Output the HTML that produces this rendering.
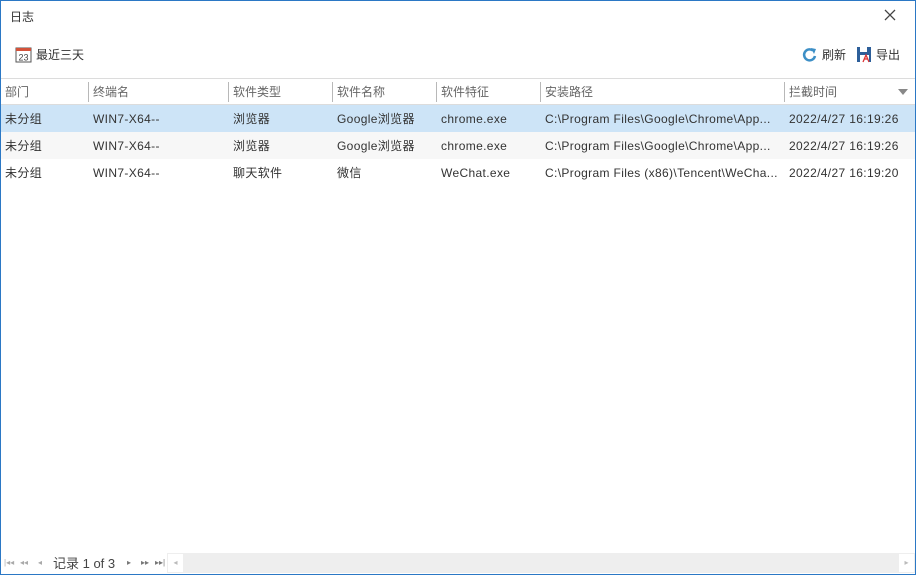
<!DOCTYPE html>
<html><head><meta charset="utf-8"><style>
*{margin:0;padding:0;box-sizing:border-box}
body{width:916px;height:575px;overflow:hidden;background:#fff;font-family:"Liberation Sans","Noto Sans CJK SC",sans-serif;font-size:12px;color:#333;position:relative}
.win{position:absolute;left:0;top:0;width:916px;height:575px;border:1px solid #2b78c5}
.title{position:absolute;left:10px;top:8px;font-size:12px;color:#333}
.close{position:absolute;left:884px;top:9px}
.tb{position:absolute;top:46px;font-size:12px;color:#333}
.hdr{position:absolute;left:1px;top:78px;width:914px;height:27px;border-top:1px solid #dcdcdc;border-bottom:1px solid #dcdcdc;background:#fff}
.hc{position:absolute;color:#666;padding-left:4px;border-left:1px solid #b8b8b8;height:20px;top:3px;line-height:20px}
.row{position:absolute;left:1px;width:914px;height:27px;line-height:28px;letter-spacing:0.35px}
.c{position:absolute;top:0;white-space:nowrap}
.pager{position:absolute;left:1px;top:553px;width:914px;height:21px;font-size:13px}
.pi{position:absolute;top:0;font-size:8px;line-height:20px}
</style></head><body>
<div class="win"></div>
<div class="title">日志</div>
<svg class="close" width="12" height="12" viewBox="0 0 12 12"><path d="M1 1L11 11M11 1L1 11" stroke="#444" stroke-width="1.3"/></svg>
<svg style="position:absolute;left:15px;top:46px" width="17" height="17" viewBox="0 0 17 17"><rect x="1" y="2" width="15" height="14" fill="#fff" stroke="#555"/><rect x="1" y="2" width="15" height="3" fill="#d3523a"/><text x="8.5" y="14.5" font-size="9" text-anchor="middle" fill="#444" font-family="Liberation Sans">23</text></svg>
<div class="tb" style="left:36px">最近三天</div>
<svg style="position:absolute;left:802px;top:47px" width="16" height="16" viewBox="0 0 16 16"><path d="M13 9A5.5 5.5 0 1 1 11 3.5" fill="none" stroke="#3d8fc6" stroke-width="2.5"/><path d="M9 1L14 2L12 7Z" fill="#3d8fc6"/></svg>
<div class="tb" style="left:822px">刷新</div>
<svg style="position:absolute;left:856px;top:46px" width="17" height="17" viewBox="0 0 17 17"><rect x="1" y="1" width="14" height="15" fill="#2d5f9a"/><rect x="4" y="1" width="7" height="5" fill="#fff"/><rect x="4" y="9" width="9" height="7" fill="#fff"/><path d="M7 16L10 9L13 16M8 13H12" stroke="#d33" stroke-width="1.3" fill="none"/></svg>
<div class="tb" style="left:876px">导出</div>
<div class="hdr">
<div class="hc" style="left:0;border-left:none">部门</div>
<div class="hc" style="left:87px">终端名</div>
<div class="hc" style="left:227px">软件类型</div>
<div class="hc" style="left:331px">软件名称</div>
<div class="hc" style="left:435px">软件特征</div>
<div class="hc" style="left:539px">安装路径</div>
<div class="hc" style="left:783px">拦截时间</div>
<svg style="position:absolute;left:897px;top:10px" width="10" height="6"><path d="M0 0H10L5 6Z" fill="#888"/></svg>
</div>
<div class="row" style="top:105px;background:#cde4f7">
<span class="c" style="left:4px">未分组</span><span class="c" style="left:92px">WIN7-X64--</span><span class="c" style="left:232px">浏览器</span><span class="c" style="left:336px">Google浏览器</span><span class="c" style="left:440px">chrome.exe</span><span class="c" style="left:544px">C:\Program Files\Google\Chrome\App...</span><span class="c" style="left:788px">2022/4/27 16:19:26</span></div>
<div class="row" style="top:132px;background:#f7f7f7">
<span class="c" style="left:4px">未分组</span><span class="c" style="left:92px">WIN7-X64--</span><span class="c" style="left:232px">浏览器</span><span class="c" style="left:336px">Google浏览器</span><span class="c" style="left:440px">chrome.exe</span><span class="c" style="left:544px">C:\Program Files\Google\Chrome\App...</span><span class="c" style="left:788px">2022/4/27 16:19:26</span></div>
<div class="row" style="top:159px">
<span class="c" style="left:4px">未分组</span><span class="c" style="left:92px">WIN7-X64--</span><span class="c" style="left:232px">聊天软件</span><span class="c" style="left:336px">微信</span><span class="c" style="left:440px">WeChat.exe</span><span class="c" style="left:544px">C:\Program Files (x86)\Tencent\WeCha...</span><span class="c" style="left:788px">2022/4/27 16:19:20</span></div>
<div class="pager">
<span class="pi" style="left:3px;color:#aaa">|◂◂</span>
<span class="pi" style="left:19px;color:#aaa">◂◂</span>
<span class="pi" style="left:37px;color:#aaa">◂</span>
<span style="position:absolute;left:52px;top:1px;line-height:20px;color:#444">记录 1 of 3</span>
<span class="pi" style="left:126px;color:#777">▸</span>
<span class="pi" style="left:140px;color:#777">▸▸</span>
<span class="pi" style="left:154px;color:#777">▸▸|</span>
<div style="position:absolute;left:166px;top:0;width:748px;height:20px;background:#eee"></div>
<div style="position:absolute;left:167px;top:1px;width:15px;height:18px;background:#fff;color:#bbb;font-size:8px;text-align:center;line-height:18px">◂</div>
<div style="position:absolute;left:898px;top:1px;width:15px;height:18px;background:#fff;color:#bbb;font-size:8px;text-align:center;line-height:18px">▸</div>
</div>
</body></html>
